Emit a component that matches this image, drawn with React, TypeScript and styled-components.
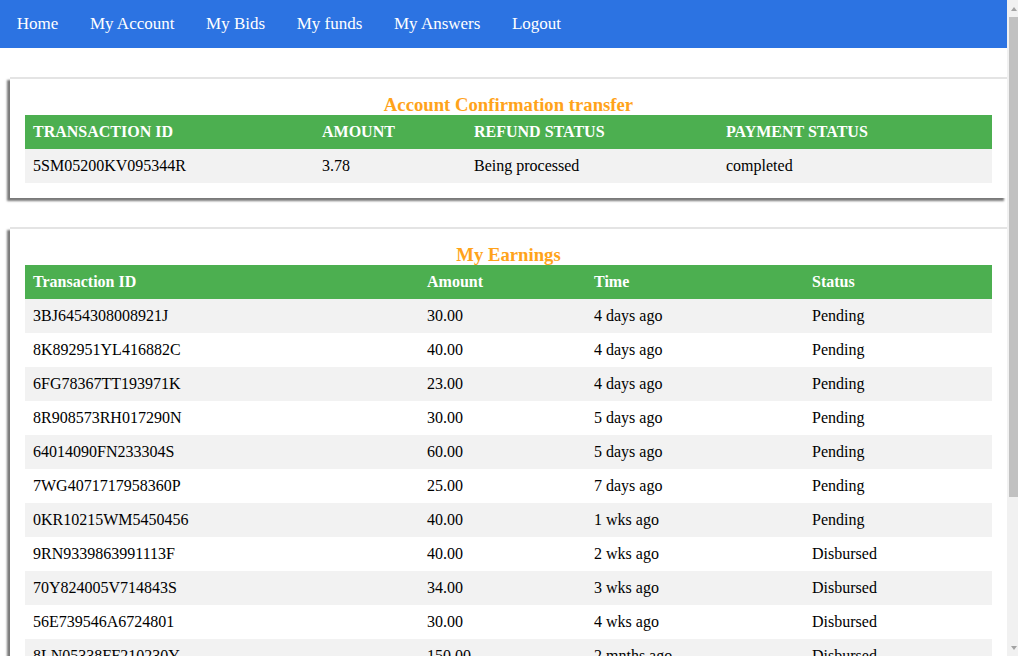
import styled, { createGlobalStyle } from 'styled-components';

const GlobalStyle = createGlobalStyle`
  html, body {
    margin: 0;
    padding: 0;
    overflow: hidden;
    background: #fff;
    font-family: "Liberation Serif", "Times New Roman", serif;
  }
`;

const Pagina = styled.div`
  display: flex;
  height: 100vh;
  background: #fff;
`;

const Vista = styled.div`
  flex: 1;
  min-width: 0;
  overflow: hidden;
`;

const Barra = styled.div`
  display: flex;
  flex-direction: column;
  width: 11px;
  background: #f1f1f1;
`;

const Flecha = styled.div<{ $abajo?: boolean }>`
  display: flex;
  justify-content: center;
  align-items: center;
  height: 17px;
  margin-top: ${({ $abajo }) => ($abajo ? 'auto' : '0')};

  &::after {
    content: '';
    width: 0;
    height: 0;
    margin-left: 2px;
    border-left: 3.5px solid transparent;
    border-right: 3.5px solid transparent;
    ${({ $abajo }) => ($abajo ? 'border-top: 4px solid #a3a3a3;' : 'border-bottom: 4px solid #a3a3a3;')}
  }
`;

const Pulgar = styled.div`
  height: 480px;
  margin-left: 2px;
  background: #c1c1c1;
`;

const Menu = styled.nav`
  display: flex;
  align-items: center;
  height: 48px;
  padding-left: 1px;
  background: #2c73e2;
`;

const MenuLink = styled.a`
  padding: 0 15.8px;
  font-size: 17px;
  color: #fff;
  text-decoration: none;
  line-height: 48px;
`;

const Contenido = styled.main`
  padding: 29px 0 0 10px;
`;

const Tarjeta = styled.section`
  margin-bottom: 29px;
  padding: 15px 15px 15px;
  background: #fff;
  border-top: 2px solid #e4e4e4;
  box-shadow: -3px 3px 2px #7a7a7a;
`;

const Titulo = styled.h3`
  margin: 0;
  text-align: center;
  font-size: 18.72px;
  font-weight: bold;
  color: #ffa31a;
  line-height: 21px;
`;

const Tabla = styled.table`
  width: 100%;
  border-collapse: collapse;
  table-layout: fixed;
  font-size: 16px;

  tbody tr:nth-child(odd) {
    background: #f2f2f2;
  }
`;

const Cabecera = styled.th<{ $ancho: string }>`
  width: ${({ $ancho }) => $ancho};
  padding: 8px;
  text-align: left;
  font-weight: bold;
  color: #fff;
  background: #4caf50;
  line-height: 18px;
`;

const Celda = styled.td`
  padding: 8px;
  text-align: left;
  color: #000;
  line-height: 18px;
  white-space: nowrap;
`;

const links = ["Home", "My Account", "My Bids", "My funds", "My Answers", "Logout"];

const columnasTransfer = [
    { titulo: "TRANSACTION ID", ancho: "273px" },
    { titulo: "AMOUNT", ancho: "136px" },
    { titulo: "REFUND STATUS", ancho: "236px" },
    { titulo: "PAYMENT STATUS", ancho: "auto" },
];

const transferencias = [
    ["5SM05200KV095344R", "3.78", "Being processed", "completed"],
];

const columnasGanancias = [
    { titulo: "Transaction ID", ancho: "378px" },
    { titulo: "Amount", ancho: "151px" },
    { titulo: "Time", ancho: "202px" },
    { titulo: "Status", ancho: "auto" },
];

const ganancias = [
    ["3BJ6454308008921J", "30.00", "4 days ago", "Pending"],
    ["8K892951YL416882C", "40.00", "4 days ago", "Pending"],
    ["6FG78367TT193971K", "23.00", "4 days ago", "Pending"],
    ["8R908573RH017290N", "30.00", "5 days ago", "Pending"],
    ["64014090FN233304S", "60.00", "5 days ago", "Pending"],
    ["7WG4071717958360P", "25.00", "7 days ago", "Pending"],
    ["0KR10215WM5450456", "40.00", "1 wks ago", "Pending"],
    ["9RN9339863991113F", "40.00", "2 wks ago", "Disbursed"],
    ["70Y824005V714843S", "34.00", "3 wks ago", "Disbursed"],
    ["56E739546A6724801", "30.00", "4 wks ago", "Disbursed"],
    ["8LN05338FF210230Y", "150.00", "2 mnths ago", "Disbursed"],
    ["2TK81930GH552019D", "45.00", "2 mnths ago", "Disbursed"],
    ["5PA37120MC884102B", "20.00", "3 mnths ago", "Disbursed"],
    ["1XD90215KL337610E", "35.00", "3 mnths ago", "Disbursed"],
];

interface TablaProps {
    titulo: string;
    columnas: { titulo: string; ancho: string }[];
    filas: string[][];
}

const TablaTarjeta = ({ titulo, columnas, filas }: TablaProps) => (
    <Tarjeta>
        <Titulo>{titulo}</Titulo>
        <Tabla>
            <thead>
                <tr>
                    {columnas.map((c) => (
                        <Cabecera key={c.titulo} $ancho={c.ancho}>{c.titulo}</Cabecera>
                    ))}
                </tr>
            </thead>
            <tbody>
                {filas.map((fila) => (
                    <tr key={fila[0]}>
                        {fila.map((valor, i) => <Celda key={i}>{valor}</Celda>)}
                    </tr>
                ))}
            </tbody>
        </Tabla>
    </Tarjeta>
);

export default function App() {
    return (
        <>
            <GlobalStyle />
            <Pagina>
                <Vista>
                    <Menu>
                        {links.map((l) => <MenuLink key={l} href="#">{l}</MenuLink>)}
                    </Menu>
                    <Contenido>
                        <TablaTarjeta titulo="Account Confirmation transfer" columnas={columnasTransfer} filas={transferencias} />
                        <TablaTarjeta titulo="My Earnings" columnas={columnasGanancias} filas={ganancias} />
                    </Contenido>
                </Vista>
                <Barra>
                    <Flecha />
                    <Pulgar />
                    <Flecha $abajo />
                </Barra>
            </Pagina>
        </>
    );
}
